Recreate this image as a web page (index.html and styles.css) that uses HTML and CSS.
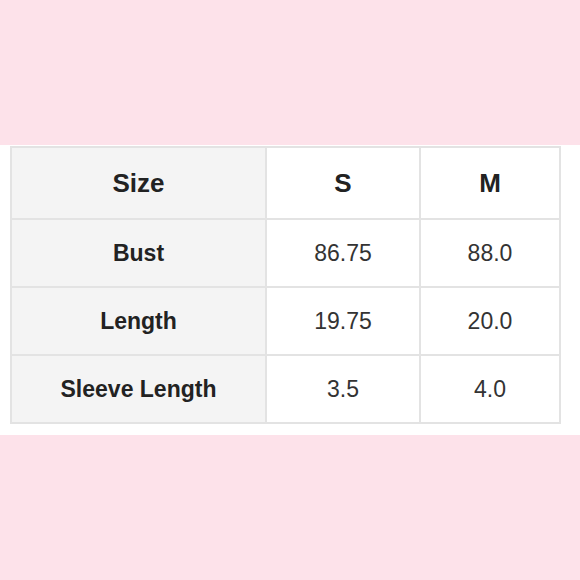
FILE: index.html
```html
<!DOCTYPE html>
<html>
<head>
<meta charset="utf-8">
<link rel="stylesheet" href="styles.css">
</head>
<body>
<div class="top-band"></div>
<div class="sheet">
  <table class="size-table">
    <colgroup>
      <col class="c-label">
      <col class="c-s">
      <col class="c-m">
    </colgroup>
    <tr class="head">
      <th class="label">Size</th>
      <th>S</th>
      <th>M</th>
    </tr>
    <tr>
      <td class="label">Bust</td>
      <td>86.75</td>
      <td>88.0</td>
    </tr>
    <tr>
      <td class="label">Length</td>
      <td>19.75</td>
      <td>20.0</td>
    </tr>
    <tr>
      <td class="label">Sleeve Length</td>
      <td>3.5</td>
      <td>4.0</td>
    </tr>
  </table>
</div>
</body>
</html>
```
FILE: styles.css
```css
html, body {
  margin: 0;
  padding: 0;
}
body {
  background: #fde2ea;
  width: 580px;
  height: 580px;
  overflow: hidden;
  font-family: "Liberation Sans", Arial, sans-serif;
}
.top-band {
  height: 145px;
}
.sheet {
  background: #ffffff;
  padding: 1px 0 11px 10px;
}
.size-table {
  border-collapse: separate;
  border-spacing: 0;
  table-layout: fixed;
  width: 551px;
  border-top: 2px solid #e3e3e3;
  border-left: 2px solid #e3e3e3;
}
.c-label { width: 255px; }
.c-s { width: 154px; }
.c-m { width: 140px; }
.size-table th,
.size-table td {
  border-right: 2px solid #e3e3e3;
  border-bottom: 2px solid #e3e3e3;
  padding: 0;
  text-align: center;
  vertical-align: middle;
  height: 66px;
  font-size: 23px;
  color: #333;
  font-weight: normal;
}
.size-table .head th {
  height: 70px;
  font-size: 26px;
  font-weight: bold;
  color: #222;
}
.size-table .label {
  background: #f4f4f4;
  font-weight: bold;
  color: #222;
}
```
